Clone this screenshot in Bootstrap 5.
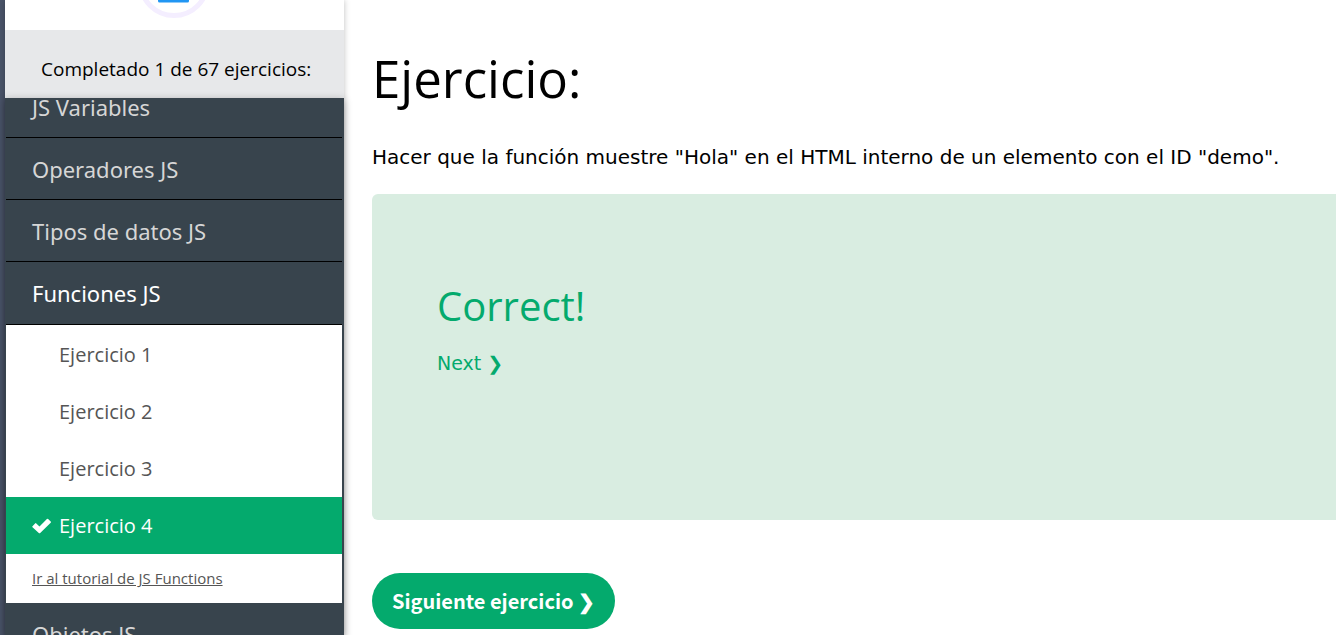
<!DOCTYPE html>
<html lang="es">
<head>
<meta charset="utf-8">
<meta name="viewport" content="width=device-width, initial-scale=1">
<title>Ejercicios JS</title>
<link href="https://cdn.jsdelivr.net/npm/bootstrap@5.3.0/dist/css/bootstrap.min.css" rel="stylesheet">
<style>
  :root { --brand: #04aa6d; --slate: #38444d; }
  body { font-family: "Open Sans", "Noto Sans", sans-serif; color: #000; background: #fff; }
  .edge { width: 5px; background: #4a5469; }
  .side { width: 339px; box-shadow: 0 0 6px rgba(0,0,0,.25); }
  .side-count { background: #e7e8ea; font-size: 19px; line-height: 24px; padding: 27px 24px 17px 36px; }
  .topics { background: var(--slate); padding: 0 2px 0 1px; box-shadow: 0 2px 8px rgba(0,0,0,.3); }
  .topic { color: #d6d6d6; font-family: "Noto Sans", sans-serif; font-size: 22px; line-height: 29px; padding: 17px 26px 15px; border-bottom: 1px solid #000; text-decoration: none; }
  .topic.scrolled { margin-top: -22px; }
  .topic.current { color: #fff; padding-bottom: 16px; }
  .lessons { padding-top: 1px; }
  .lesson { color: #555; font-size: 20px; line-height: 25px; padding: 16px 26px 16px 53px; text-decoration: none; }
  .lesson.done { background: var(--brand); color: #fff; padding-left: 26px; }
  .tutorial { color: #555; font-size: 15px; line-height: 25px; padding: 12px 26px; }
  .work { padding: 42px 0 0 28px; }
  .work h1 { font-size: 51px; line-height: 72px; margin-bottom: 28px; font-weight: 400; }
  .task { font-family: "DejaVu Sans", sans-serif; font-size: 20px; line-height: 30px; margin-bottom: 22px; }
  .result { background: #d9ede1; color: var(--brand); border-radius: 6px 0 0 6px; min-height: 326px; padding: 84px 65px; }
  .result h2 { font-size: 40px; line-height: 56px; margin-bottom: 14px; font-weight: 400; }
  .result a { color: var(--brand); font-family: "DejaVu Sans", sans-serif; font-size: 19px; line-height: 30px; text-decoration: none; }
  .next-btn { background: var(--brand); color: #fff; font-family: "Noto Sans CJK SC", sans-serif; font-weight: 700; font-size: 20px; line-height: 32px; border: 0; border-radius: 28px; padding: 12px 20px; margin-top: 53px; }
</style>
</head>
<body>
<div class="d-flex vh-100 overflow-hidden">
  <div class="edge flex-shrink-0"></div>
  <aside class="side flex-shrink-0">
    <div class="d-flex justify-content-center">
      <svg width="72" height="30" viewBox="0 0 72 30" aria-hidden="true">
        <circle cx="35" cy="-18" r="33.500" fill="none" stroke="#f4eeff" stroke-width="5"/>
        <rect x="19" y="-20" width="31" height="22.500" rx="1.500" fill="#2196f3"/>
      </svg>
    </div>
    <div class="side-count">Completado 1 de 67 ejercicios:</div>
    <nav class="topics d-flex flex-column vh-100 overflow-hidden">
      <a class="topic scrolled d-block" href="#">JS Variables</a>
      <a class="topic d-block" href="#">Operadores JS</a>
      <a class="topic d-block" href="#">Tipos de datos JS</a>
      <a class="topic current d-block" href="#">Funciones JS</a>
      <div class="lessons bg-white d-flex flex-column">
        <a class="lesson" href="#">Ejercicio 1</a>
        <a class="lesson" href="#">Ejercicio 2</a>
        <a class="lesson" href="#">Ejercicio 3</a>
        <a class="lesson done d-flex align-items-center" href="#"><svg class="me-2" width="19" height="16" viewBox="0.500 0 19 16" aria-hidden="true"><path d="M1 8.2 3.6 5.4Q4.2 4.8 4.8 5.4L8 8.5 15.4 1.1Q16 .6 16.600 1.100L19.200 3.600Q19.700 4.200 19.200 4.800L8.700 15Q8 15.600 7.300 15L1 9.300Q.5 8.800 1 8.200Z" fill="#fff"/></svg>Ejercicio 4</a>
        <a class="tutorial" href="#">Ir al tutorial de JS Functions</a>
      </div>
      <a class="topic d-block" href="#">Objetos JS</a>
    </nav>
  </aside>
  <main class="work flex-grow-1">
    <h1>Ejercicio:</h1>
    <p class="task">Hacer que la función muestre "Hola" en el HTML interno de un elemento con el ID "demo".</p>
    <section class="result">
      <h2>Correct!</h2>
      <a href="#">Next ❯</a>
    </section>
    <button type="button" class="next-btn">Siguiente ejercicio ❯</button>
  </main>
</div>
<script src="https://cdn.jsdelivr.net/npm/bootstrap@5.3.0/dist/js/bootstrap.bundle.min.js"></script>
</body>
</html>
